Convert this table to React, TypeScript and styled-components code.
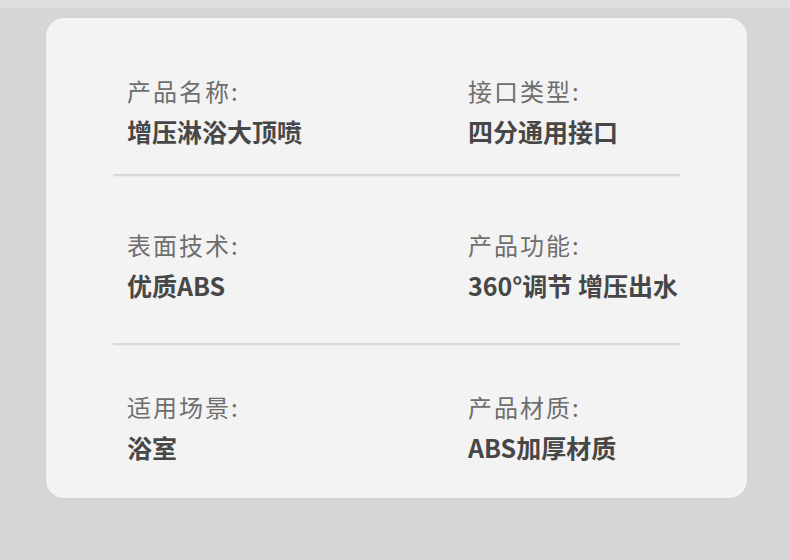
import { ReactElement } from 'react'
import styled, { createGlobalStyle } from 'styled-components'

const GlobalStyle = createGlobalStyle`
  html, body {
    margin: 0;
    padding: 0;
    background: #d6d6d6;
  }
  body {
    font-family: "Noto Sans CJK SC", "Noto Sans", sans-serif;
  }
`

const Page = styled.div`
  width: 790px;
  height: 560px;
  background: #d6d6d6;
  display: flex;
  flex-direction: column;
`

const TopStrip = styled.div`
  height: 8px;
  background: #dfdfdf;
`

const Body = styled.div`
  padding: 10px 43px 0 46px;
`

const Card = styled.div`
  width: 701px;
  height: 480px;
  box-sizing: border-box;
  background: #f3f3f3;
  border-radius: 18px;
  box-shadow: 0 0 3px rgba(0, 0, 0, 0.04);
  padding: 0 67px;
  display: flex;
  flex-direction: column;
`

const Section = styled.div<{ $top: number; $bottom: number }>`
  display: grid;
  grid-template-columns: 341px 1fr;
  padding: ${(p) => p.$top}px 0 ${(p) => p.$bottom}px 14px;
`

const Item = styled.div`
  display: flex;
  flex-direction: column;
`

const Label = styled.div`
  font-size: 24px;
  line-height: 40px;
  letter-spacing: 2px;
  color: #6e6e6e;
  white-space: nowrap;
`

const Value = styled.div`
  font-size: 25px;
  line-height: 40px;
  font-weight: 700;
  color: #474747;
  white-space: nowrap;
`

const Divider = styled.div`
  height: 2px;
  background: #d9d9d9;
  border-bottom: 1px solid #ececec;
`

type Spec = { label: string; value: string }

const rows: { top: number; bottom: number; items: Spec[] }[] = [
  {
    top: 53,
    bottom: 23,
    items: [
      { label: '产品名称:', value: '增压淋浴大顶喷' },
      { label: '接口类型:', value: '四分通用接口' },
    ],
  },
  {
    top: 48,
    bottom: 38,
    items: [
      { label: '表面技术:', value: '优质ABS' },
      { label: '产品功能:', value: '360°调节 增压出水' },
    ],
  },
  {
    top: 41,
    bottom: 0,
    items: [
      { label: '适用场景:', value: '浴室' },
      { label: '产品材质:', value: 'ABS加厚材质' },
    ],
  },
]

const App = (): ReactElement => {
  return (
    <Page>
      <GlobalStyle />
      <TopStrip />
      <Body>
        <Card>
          {rows.map((row, i) => (
            <div key={i}>
              <Section $top={row.top} $bottom={row.bottom}>
                {row.items.map((item) => (
                  <Item key={item.label}>
                    <Label>{item.label}</Label>
                    <Value>{item.value}</Value>
                  </Item>
                ))}
              </Section>
              {i < rows.length - 1 && <Divider />}
            </div>
          ))}
        </Card>
      </Body>
    </Page>
  )
}

export default App
